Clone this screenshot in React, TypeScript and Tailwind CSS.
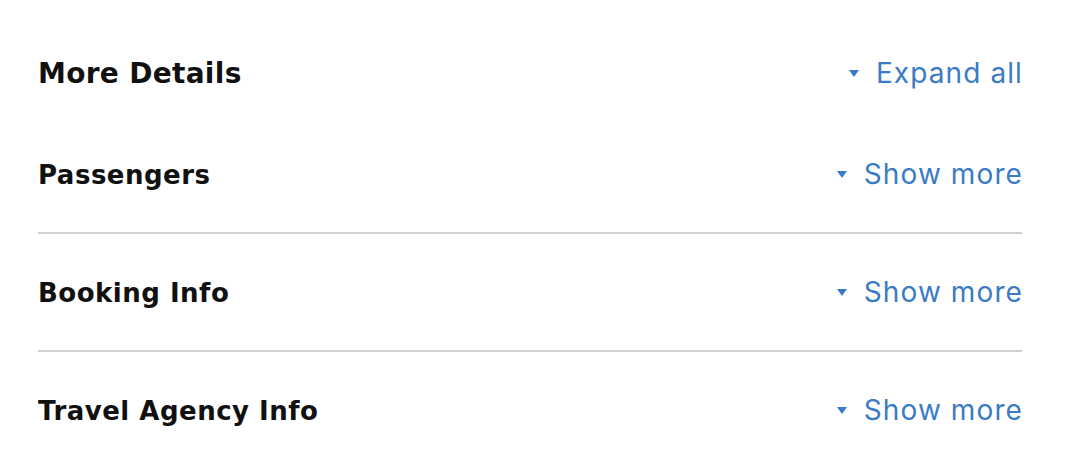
const rows = ['Passengers', 'Booking Info', 'Travel Agency Info'];

function Caret() {
  return (
    <svg width="10" height="7" viewBox="0 0 10 7" className="shrink-0">
      <path d="M0 0H10L5 7Z" fill="#3a7bc6" />
    </svg>
  );
}

function Toggle({ label }: { label: string }) {
  return (
    <button
      className="flex items-center gap-[17px] text-[28px] tracking-[1.1px] text-[#3a7bc6] -mr-[1px]"
      style={{ fontFamily: 'Inter, sans-serif' }}
    >
      <Caret />
      <span>{label}</span>
    </button>
  );
}

export default function App() {
  return (
    <div
      className="w-[1066px] h-[476px] bg-white pl-[38px] pr-[44px]"
      style={{ fontFamily: '"DejaVu Sans", sans-serif' }}
    >
      {/* Header */}
      <div className="flex h-[116px] items-center justify-between pt-[30px]">
        <h2 className="pt-[2px] text-[28px] font-bold tracking-[0.3px] text-[#111]">More Details</h2>
        <Toggle label="Expand all" />
      </div>

      {/* Sections */}
      {rows.map((r, i) => (
        <div key={r}>
          {i > 0 && <div className="h-[2px] bg-[#cfcfcf]" />}
          <div className="flex h-[116px] items-center justify-between">
            <h3 className="pt-[2px] text-[26px] font-bold tracking-[0.5px] text-[#111]">{r}</h3>
            <Toggle label="Show more" />
          </div>
        </div>
      ))}
    </div>
  );
}
